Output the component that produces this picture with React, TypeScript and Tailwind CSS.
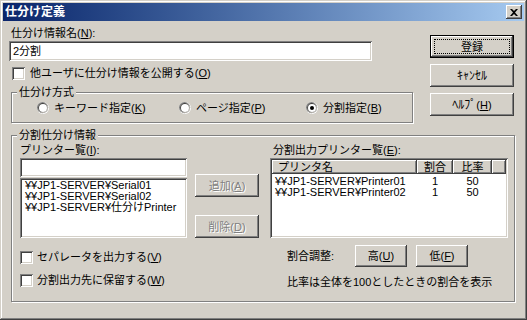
import React from "react";

const FONT = "font-['Liberation_Sans','Noto_Sans_CJK_JP',sans-serif]";
const WIN = "shadow-[inset_-1px_-1px_0_#404040,inset_1px_1px_0_#d4d0c8,inset_-2px_-2px_0_#808080,inset_2px_2px_0_#ffffff]";
const RAISED = "shadow-[inset_-1px_-1px_0_#404040,inset_1px_1px_0_#ffffff,inset_-2px_-2px_0_#808080,inset_2px_2px_0_#d4d0c8]";
const SUNKEN = "shadow-[inset_1px_1px_0_#808080,inset_-1px_-1px_0_#ffffff,inset_2px_2px_0_#404040,inset_-2px_-2px_0_#d4d0c8]";
const ETCHED = "border border-[#808080] shadow-[inset_1px_1px_0_#ffffff,1px_1px_0_#ffffff]";

function U({ children }: { children: React.ReactNode }) {
  return <span className="underline underline-offset-[1px]">{children}</span>;
}

function Check() {
  return <span className={"inline-block shrink-0 w-[13px] h-[13px] bg-white " + SUNKEN} />;
}

function Radio({ checked }: { checked?: boolean }) {
  return (
    <svg width="12" height="12" viewBox="0 0 12 12" className="shrink-0">
      <circle cx="6" cy="6" r="6" fill="#ffffff" />
      <circle cx="5.6" cy="5.6" r="5.6" fill="#808080" />
      <circle cx="6" cy="6" r="5" fill="#d4d0c8" />
      <circle cx="5.7" cy="5.7" r="4.6" fill="#404040" />
      <circle cx="6" cy="6" r="4" fill="#ffffff" />
      {checked && <circle cx="6" cy="6" r="2" fill="#000000" />}
    </svg>
  );
}

function Btn({ children, className = "", disabled, def }: { children: React.ReactNode; className?: string; disabled?: boolean; def?: boolean }) {
  return (
    <div
      className={
        "relative flex items-center justify-center bg-[#d4d0c8] " +
        (def ? "border border-black " : "") +
        RAISED + " " +
        (disabled ? "text-[#808080] [text-shadow:1px_1px_0_#ffffff] " : "") +
        className
      }
    >
      {def && <span className="absolute inset-[3px] border border-dotted border-black" />}
      <span className="relative whitespace-nowrap">{children}</span>
    </div>
  );
}

function Group({ title, className = "", children }: { title: string; className?: string; children: React.ReactNode }) {
  return (
    <div className={"relative " + ETCHED + " " + className}>
      <span className="absolute -top-[8px] left-[5px] px-[2px] bg-[#d4d0c8]">{title}</span>
      {children}
    </div>
  );
}

const PRINTERS = [
  { name: "¥¥JP1-SERVER¥Printer01", ratio: 1, pct: 50 },
  { name: "¥¥JP1-SERVER¥Printer02", ratio: 1, pct: 50 },
];

export default function App() {
  return (
    <div className={FONT + " w-[527px] h-[320px] bg-[#d4d0c8] p-[3px] flex flex-col text-black text-[11px] leading-[14px] " + WIN}>
      {/* title bar */}
      <div className="h-[18px] flex items-center justify-between bg-linear-to-r from-[#0a246a] to-[#a6caf0] pl-[2px] pr-[2px]">
        <span className="text-white font-bold text-[12px]">仕分け定義</span>
        <div className={"w-[16px] h-[14px] bg-[#d4d0c8] flex items-center justify-center " + RAISED}>
          <svg width="8" height="7" viewBox="0 0 8 7">
            <path d="M0 0h2l2 2 2-2h2L5 3.5 8 7H6L4 5 2 7H0l3-3.5z" fill="#000" />
          </svg>
        </div>
      </div>

      {/* upper area */}
      <div className="flex">
        <div className="ml-[6px] w-[404px] flex flex-col">
          <div className="mt-[5px] pl-[2px] h-[14px]">仕分け情報名(<U>N</U>):</div>
          <div className={"mt-[1px] h-[20px] w-[363px] bg-white pl-[4px] flex items-center " + SUNKEN}>2分割</div>
          <div className="mt-[5px] ml-[3px] h-[14px] flex items-center gap-[5px]">
            <Check />
            <span>他ユーザに仕分け情報を公開する(<U>O</U>)</span>
          </div>
          <Group title="仕分け方式" className="mt-[12px] ml-[2px] w-[402px] h-[31px]">
            <div className="h-full flex items-center pl-[25px]">
              <div className="w-[142px] flex items-center gap-[5px]"><Radio /><span>キーワード指定(<U>K</U>)</span></div>
              <div className="w-[127px] flex items-center gap-[5px]"><Radio /><span>ページ指定(<U>P</U>)</span></div>
              <div className="flex items-center gap-[5px]"><Radio checked /><span>分割指定(<U>B</U>)</span></div>
            </div>
          </Group>
        </div>
        <div className="ml-[17px] w-[84px] flex flex-col pt-[14px] gap-[6px]">
          <Btn def className="h-[23px]">登録</Btn>
          <Btn className="h-[23px] text-[12px]">ｷｬﾝｾﾙ</Btn>
          <Btn className="h-[23px]"><span className="text-[12px]">ﾍﾙﾌﾟ</span>(<U>H</U>)</Btn>
        </div>
      </div>

      {/* split info group */}
      <Group title="分割仕分け情報" className="mt-[12px] ml-[8px] w-[504px] h-[167px]">
        <div className="flex flex-col pl-[8px] pt-[7px]">
          <div className="flex">
            <div className="w-[167px] flex flex-col">
              <div className="h-[14px]">プリンター覧(<U>I</U>):</div>
              <div className={"mt-[1px] h-[19px] bg-white " + SUNKEN} />
              <div className={"mt-[1px] h-[60px] bg-white pt-[2px] pl-[5px] flex flex-col whitespace-nowrap " + SUNKEN}>
                <div className="h-[11px] leading-[11px]">¥¥JP1-SERVER¥Serial01</div>
                <div className="h-[11px] leading-[11px]">¥¥JP1-SERVER¥Serial02</div>
                <div className="h-[11px] leading-[11px]">¥¥JP1-SERVER¥仕分けPrinter</div>
              </div>
            </div>
            <div className="ml-[8px] w-[64px] flex flex-col">
              <Btn disabled className="mt-[31px] h-[23px]">追加(<U>A</U>)</Btn>
              <Btn disabled className="mt-[18px] h-[23px]">削除(<U>D</U>)</Btn>
            </div>
            <div className="ml-[11px] w-[238px] flex flex-col">
              <div className="h-[14px] pl-[3px]">分割出力プリンター覧(<U>E</U>):</div>
              <div className={"mt-[1px] h-[80px] bg-white p-[2px] flex flex-col " + SUNKEN}>
                <div className="flex h-[14px] leading-[14px]">
                  <div className={"w-[145px] pl-[6px] bg-[#d4d0c8] " + RAISED}>プリンタ名</div>
                  <div className={"w-[36px] text-center bg-[#d4d0c8] " + RAISED}>割合</div>
                  <div className={"w-[39px] text-center bg-[#d4d0c8] " + RAISED}>比率</div>
                  <div className={"flex-1 bg-[#d4d0c8] " + RAISED} />
                </div>
                <div className="pt-[2px] flex flex-col whitespace-nowrap">
                  {PRINTERS.map((p) => (
                    <div key={p.name} className="flex h-[11px] leading-[11px]">
                      <div className="w-[145px] pl-[3px]">{p.name}</div>
                      <div className="w-[36px] text-center">{p.ratio}</div>
                      <div className="w-[39px] text-center">{p.pct}</div>
                    </div>
                  ))}
                </div>
              </div>
            </div>
          </div>

          <div className="flex">
            <div className="w-[267px] flex flex-col">
              <div className="mt-[12px] h-[14px] flex items-center gap-[4px]">
                <Check />
                <span>セパレータを出力する(<U>V</U>)</span>
              </div>
              <div className="mt-[9px] h-[14px] flex items-center gap-[4px]">
                <Check />
                <span>分割出力先に保留する(<U>W</U>)</span>
              </div>
            </div>
            <div className="flex flex-col">
              <div className="mt-[7px] h-[22px] flex items-center">
                <span className="w-[68px]">割合調整:</span>
                <Btn className="w-[52px] h-[22px]">高(<U>U</U>)</Btn>
                <Btn className="ml-[9px] w-[52px] h-[22px]">低(<U>F</U>)</Btn>
              </div>
              <div className="mt-[8px] h-[14px]">比率は全体を100としたときの割合を表示</div>
            </div>
          </div>
        </div>
      </Group>
    </div>
  );
}
